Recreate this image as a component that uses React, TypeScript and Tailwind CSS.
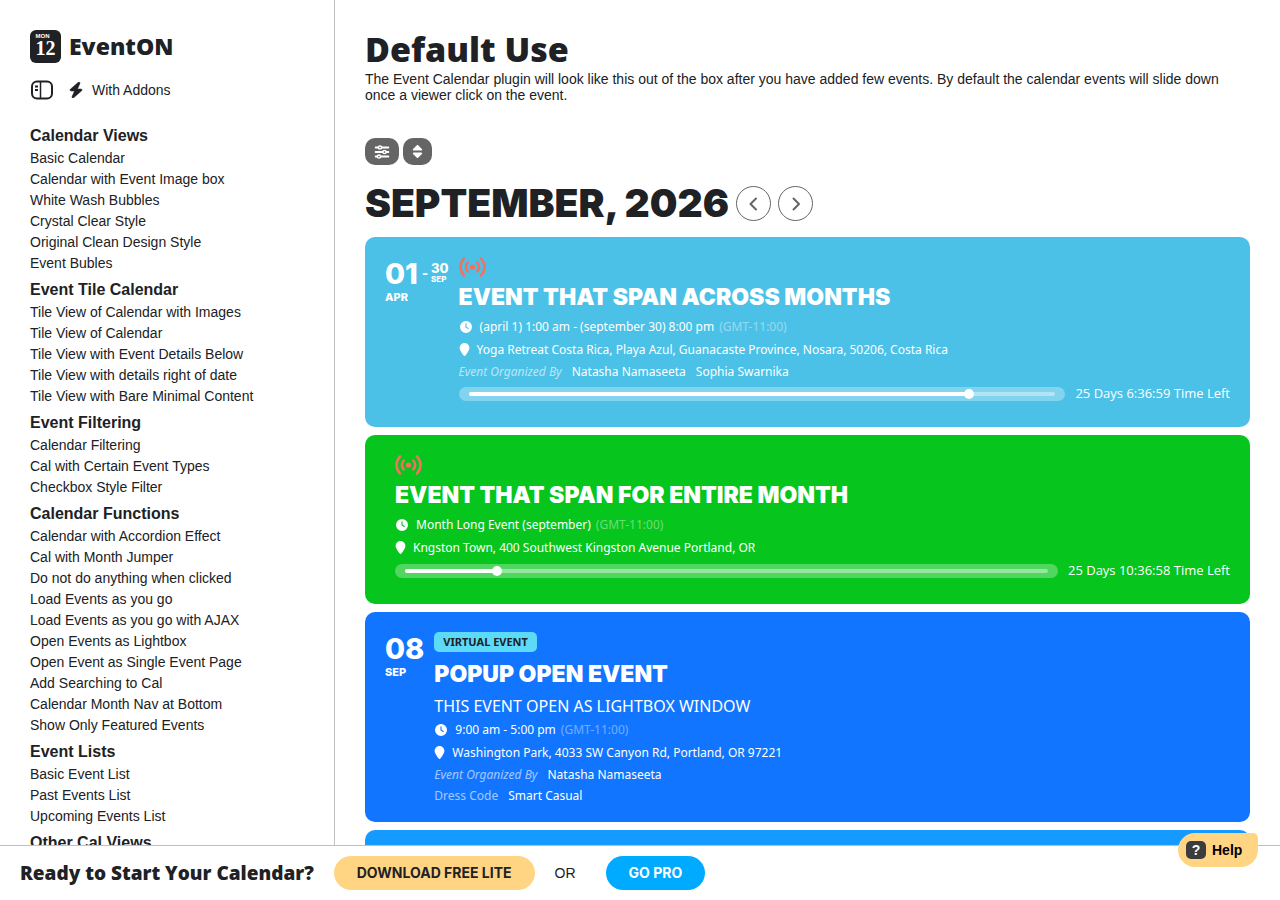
import { ReactNode } from "react";
import { FaBolt, FaClock, FaLocationPin, FaSort } from "react-icons/fa6";

type EventItem = {
  color: string;
  day?: string;
  month?: string;
  endDay?: string;
  endMonth?: string;
  live?: boolean;
  badge?: string;
  title: string;
  subtitle?: string;
  time: string;
  location: string;
  organizers?: string[];
  dressCode?: string;
  progress?: number;
  timeLeft?: string;
};

const menu = [
  {
    title: "Calendar Views",
    links: [
      "Basic Calendar",
      "Calendar with Event Image box",
      "White Wash Bubbles",
      "Crystal Clear Style",
      "Original Clean Design Style",
      "Event Bubles",
    ],
  },
  {
    title: "Event Tile Calendar",
    links: [
      "Tile View of Calendar with Images",
      "Tile View of Calendar",
      "Tile View with Event Details Below",
      "Tile View with details right of date",
      "Tile View with Bare Minimal Content",
    ],
  },
  {
    title: "Event Filtering",
    links: [
      "Calendar Filtering",
      "Cal with Certain Event Types",
      "Checkbox Style Filter",
    ],
  },
  {
    title: "Calendar Functions",
    links: [
      "Calendar with Accordion Effect",
      "Cal with Month Jumper",
      "Do not do anything when clicked",
      "Load Events as you go",
      "Load Events as you go with AJAX",
      "Open Events as Lightbox",
      "Open Event as Single Event Page",
      "Add Searching to Cal",
      "Calendar Month Nav at Bottom",
      "Show Only Featured Events",
    ],
  },
  {
    title: "Event Lists",
    links: ["Basic Event List", "Past Events List", "Upcoming Events List"],
  },
  { title: "Other Cal Views", links: [] },
];

const events: EventItem[] = [
  {
    color: "bg-[#4bc1e7]",
    day: "01",
    month: "APR",
    endDay: "30",
    endMonth: "SEP",
    live: true,
    title: "EVENT THAT SPAN ACROSS MONTHS",
    time: "(april 1) 1:00 am - (september 30) 8:00 pm",
    location:
      "Yoga Retreat Costa Rica, Playa Azul, Guanacaste Province, Nosara, 50206, Costa Rica",
    organizers: ["Natasha Namaseeta", "Sophia Swarnika"],
    progress: 85.3,
    timeLeft: "25 Days 6:36:59 Time Left",
  },
  {
    color: "bg-[#06c51c]",
    live: true,
    title: "EVENT THAT SPAN FOR ENTIRE MONTH",
    time: "Month Long Event (september)",
    location: "Kngston Town, 400 Southwest Kingston Avenue Portland, OR",
    progress: 14.3,
    timeLeft: "25 Days 10:36:58 Time Left",
  },
  {
    color: "bg-[#1175ff]",
    day: "08",
    month: "SEP",
    badge: "VIRTUAL EVENT",
    title: "POPUP OPEN EVENT",
    subtitle: "THIS EVENT OPEN AS LIGHTBOX WINDOW",
    time: "9:00 am - 5:00 pm",
    location: "Washington Park, 4033 SW Canyon Rd, Portland, OR 97221",
    organizers: ["Natasha Namaseeta"],
    dressCode: "Smart Casual",
  },
];

function Logo() {
  return (
    <a href="#" className="flex items-center gap-2">
      <span className="flex h-[33px] w-[31px] flex-col items-center rounded-md bg-[#202124] pt-[3px] text-white">
        <span className="pr-1.5 text-[6px] leading-[6px] font-bold">MON</span>
        <span className="font-['Liberation_Serif',serif] text-xl leading-[18px] font-bold">
          12
        </span>
      </span>
      <span className="pb-0.5 font-['Open_Sans',sans-serif] text-[23px] leading-[30px] font-extrabold">
        EventON
      </span>
    </a>
  );
}

function LayoutIcon() {
  return (
    <svg width="24" height="20" viewBox="0 0 24 20" fill="none" stroke="#202124" aria-hidden="true">
      <rect x="2" y="1.5" width="20" height="17" rx="5" strokeWidth="2" />
      <path d="M10.5 2v16" strokeWidth="1.5" />
      <path d="M5 6.5h3M5 10h3" strokeWidth="1.8" />
    </svg>
  );
}

function LiveIcon() {
  return (
    <svg width="28" height="20" viewBox="0 0 28 20" fill="none" stroke="#f4705f" strokeLinecap="round" aria-hidden="true">
      <circle cx="13.5" cy="10" r="2.6" fill="#f4705f" stroke="none" />
      <path d="M5 1.5C.3 6.7.3 13.3 5 18.5M22 1.5c4.7 5.2 4.7 11.8 0 17" strokeWidth="2.6" />
      <path d="M8.8 5.5c-2.5 2.8-2.5 6.2 0 9M18.2 5.5c2.5 2.8 2.5 6.2 0 9" strokeWidth="2.4" />
    </svg>
  );
}

function FilterIcon() {
  return (
    <svg width="16" height="14" viewBox="0 0 16 14" stroke="#fff" strokeWidth="1.5" strokeLinecap="round" aria-hidden="true">
      <path d="M1.7 2.5h12.6M1.7 7h12.6M1.7 11.5h12.6" strokeWidth="2" />
      <circle cx="6" cy="2.5" r="1.6" fill="#656565" />
      <circle cx="10.5" cy="7" r="1.6" fill="#656565" />
      <circle cx="5" cy="11.5" r="1.6" fill="#656565" />
    </svg>
  );
}

function ArrowButton({ label, path }: { label: string; path: string }) {
  return (
    <button
      aria-label={label}
      className="flex size-[35px] items-center justify-center rounded-full border border-[#656565]"
    >
      <svg width="10" height="14" viewBox="0 0 10 14" fill="none" stroke="#656565" strokeWidth="2" strokeLinecap="round" strokeLinejoin="round">
        <path d={path} />
      </svg>
    </button>
  );
}

function InfoRow({ icon, children }: { icon: ReactNode; children: ReactNode }) {
  return (
    <p className="flex items-center gap-[7px] leading-[23px]">
      {icon}
      <span>{children}</span>
    </p>
  );
}

function EventCard({ event }: { event: EventItem }) {
  return (
    <article
      className={`flex rounded-[10px] px-5 pt-5 pb-4 font-['Noto_Sans',sans-serif] text-xs text-white ${event.color}`}
    >
      {event.day && (
        <div className="mr-2.5 flex shrink-0 gap-1 font-['Inter',sans-serif] font-extrabold">
          <div>
            <p className="text-[29px] leading-[34px]">{event.day}</p>
            <p className="text-[11px] leading-3">{event.month}</p>
          </div>
          {event.endDay && (
            <div className="flex gap-[3px] pt-1">
              <span className="text-[13px] leading-6">-</span>
              <div>
                <p className="text-[13px] leading-[14px]">{event.endDay}</p>
                <p className="text-[8px] leading-2">{event.endMonth}</p>
              </div>
            </div>
          )}
        </div>
      )}
      <div className={event.day ? "min-w-0 flex-1" : "ml-2.5 min-w-0 flex-1"}>
        {event.live && <LiveIcon />}
        {event.badge && (
          <span className="mb-0.5 flex h-5 w-fit items-center rounded-[5px] bg-[#5cdaf7] px-[9px] text-[11px] font-bold text-[#202124]">
            {event.badge}
          </span>
        )}
        <h3 className="pt-[5px] pb-[3px] font-['Inter',sans-serif] text-[23px] leading-[30px] font-black">
          {event.title}
        </h3>
        {event.subtitle && (
          <p className="pt-0.5 text-base leading-6">{event.subtitle}</p>
        )}
        <InfoRow icon={<FaClock size={12} className="mx-px" />}>
          {event.time}
          <span className="ml-[5px] opacity-40">(GMT-11:00)</span>
        </InfoRow>
        <InfoRow icon={<FaLocationPin size={13} className="-mx-px" />}>
          {event.location}
        </InfoRow>
        {event.organizers && (
          <p className="flex gap-2.5 leading-[21px]">
            <i className="opacity-60">Event Organized By</i>
            {event.organizers.map((name) => (
              <span key={name}>{name}</span>
            ))}
          </p>
        )}
        {event.dressCode && (
          <p className="flex gap-2.5 leading-[21px]">
            <span className="opacity-60">Dress Code</span>
            {event.dressCode}
          </p>
        )}
        {event.timeLeft && (
          <div className="mt-[5px] mb-2.5 flex h-3.5 items-center gap-2.5">
            <div className="flex h-3.5 flex-1 items-center rounded-full bg-white/30 px-2.5">
              <div className="h-1 w-full rounded-full bg-white/40">
                <div
                  className="relative h-1 rounded-full bg-white"
                  style={{ width: `${event.progress}%` }}
                >
                  <span className="absolute -top-[3px] -right-[5px] size-2.5 rounded-full bg-white" />
                </div>
              </div>
            </div>
            <span className="font-['Open_Sans',sans-serif] text-[13px]">
              {event.timeLeft}
            </span>
          </div>
        )}
      </div>
    </article>
  );
}

function Sidebar() {
  return (
    <aside className="w-[335px] shrink-0 overflow-hidden border-r border-[#c0c0c0] px-[30px] pt-[30px]">
      <Logo />
      <div className="mt-[17px] mb-5 flex h-5 items-center text-sm">
        <button aria-label="Toggle sidebar">
          <LayoutIcon />
        </button>
        <a href="#" className="ml-3.5 flex items-center gap-2">
          <FaBolt size={16} stroke="currentColor" strokeWidth={16} />
          With Addons
        </a>
      </div>
      <nav>
        {menu.map((group) => (
          <section key={group.title}>
            <h2 className="pt-[5px] pb-0.5 text-base leading-[21px] font-bold">
              {group.title}
            </h2>
            <ul>
              {group.links.map((link) => (
                <li key={link} className="text-sm leading-[21px]">
                  <a href="#">{link}</a>
                </li>
              ))}
            </ul>
          </section>
        ))}
      </nav>
    </aside>
  );
}

export default function App() {
  return (
    <div className="flex h-screen flex-col bg-white font-['Liberation_Sans',Arial,sans-serif] text-[#202124]">
      <div className="flex min-h-0 flex-1">
        <Sidebar />
        <main className="min-w-0 flex-1 overflow-hidden px-[30px] pt-[30px]">
          <h1 className="pb-0.5 font-['Open_Sans',sans-serif] text-[34px] leading-[39px] font-extrabold">
            Default Use
          </h1>
          <p className="text-sm leading-4">
            The Event Calendar plugin will look like this out of the box after
            you have added few events. By default the calendar events will slide
            down once a viewer click on the event.
          </p>
          <div className="mt-[35px] flex gap-1">
            <button
              aria-label="Filter events"
              className="flex h-[27px] w-[34px] items-center justify-center rounded-[10px] bg-[#656565]"
            >
              <FilterIcon />
            </button>
            <button
              aria-label="Sort events"
              className="flex h-[27px] w-[29px] items-center justify-center rounded-[10px] bg-[#656565] text-white"
            >
              <FaSort size={15} />
            </button>
          </div>
          <div className="mt-3.5 mb-[9px] flex h-[49px] items-center gap-[7px]">
            <h2 className="pb-0.5 font-['Inter',sans-serif] text-[39px] leading-[47px] font-black">
              SEPTEMBER, 2026
            </h2>
            <ArrowButton label="Previous month" path="M7 1.5 1.500 7 7 12.500" />
            <ArrowButton label="Next month" path="M2.500 1.500 8 7l-5.500 5.500" />
          </div>
          <div className="flex flex-col gap-2">
            {events.map((event) => (
              <EventCard key={event.title} event={event} />
            ))}
            <div className="h-40 rounded-[10px] bg-[#159aff]" />
          </div>
        </main>
      </div>
      <footer className="relative flex h-[55px] shrink-0 items-center border-t border-[#c0c0c0] px-5">
        <strong className="font-['Open_Sans',sans-serif] text-[19px] font-extrabold">
          Ready to Start Your Calendar?
        </strong>
        <a
          href="#"
          className="ml-5 rounded-full bg-[#ffd584] px-[23px] font-['Inter',sans-serif] text-sm leading-[34px] font-bold"
        >
          DOWNLOAD FREE LITE
        </a>
        <span className="mr-[30px] ml-5 text-sm">OR</span>
        <a
          href="#"
          className="rounded-full bg-[#00aaff] px-[23px] font-['Inter',sans-serif] text-sm leading-[34px] font-bold text-white"
        >
          GO PRO
        </a>
        <button className="absolute -top-[13px] right-[22px] flex h-[34px] w-20 items-center gap-1.5 rounded-[17px] rounded-tr-[5px] bg-[#ffd584] pl-2 text-sm font-bold text-black">
          <span className="h-[18px] w-5 rounded-[5px] bg-[#3c3c3c] leading-[18px] text-white">
            ?
          </span>
          Help
        </button>
      </footer>
    </div>
  );
}
